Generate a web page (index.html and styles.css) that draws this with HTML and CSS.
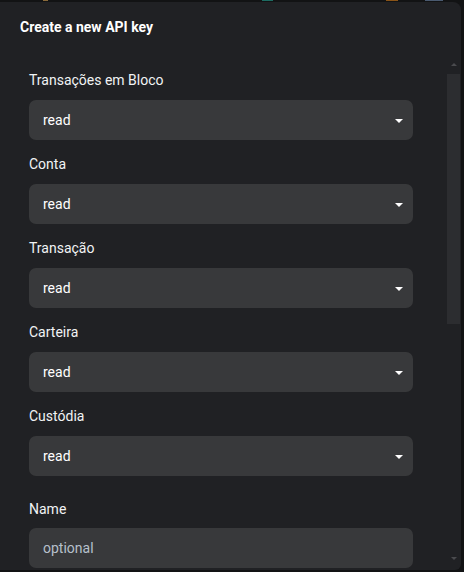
FILE: index.html
```html
<!DOCTYPE html>
<html lang="pt">
<head>
<meta charset="utf-8">
<link rel="stylesheet" href="styles.css">
</head>
<body>
<div class="backdrop-strip">
  <span class="bit bit-a"></span>
  <span class="bit bit-b"></span>
  <span class="bit bit-c"></span>
  <span class="bit bit-d"></span>
</div>
<div class="dialog">
  <div class="dialog-header">Create a new API key</div>
  <div class="dialog-body">
    <div class="content">
      <div class="field">
        <div class="label">Transações em Bloco</div>
        <div class="select"><span>read</span><span class="caret"></span></div>
      </div>
      <div class="field">
        <div class="label">Conta</div>
        <div class="select"><span>read</span><span class="caret"></span></div>
      </div>
      <div class="field">
        <div class="label">Transação</div>
        <div class="select"><span>read</span><span class="caret"></span></div>
      </div>
      <div class="field">
        <div class="label">Carteira</div>
        <div class="select"><span>read</span><span class="caret"></span></div>
      </div>
      <div class="field">
        <div class="label">Custódia</div>
        <div class="select"><span>read</span><span class="caret"></span></div>
      </div>
      <div class="field field-name">
        <div class="label">Name</div>
        <div class="input"><span class="placeholder">optional</span></div>
      </div>
    </div>
    <div class="scrollbar">
      <span class="sb-up"></span>
      <span class="sb-thumb"></span>
      <span class="sb-track"></span>
      <span class="sb-down"></span>
    </div>
  </div>
</div>
</body>
</html>
```
FILE: styles.css
```css
html, body {
  margin: 0;
  padding: 0;
}
body {
  width: 464px;
  height: 572px;
  overflow: hidden;
  background: #121314;
  font-family: Roboto, "Liberation Sans", Arial, sans-serif;
  color: #ffffff;
}
.backdrop-strip {
  height: 2px;
  display: flex;
}
.bit {
  height: 1px;
  display: block;
}
.bit-a { margin-left: 43px; width: 5px; background: #8a6a3a; }
.bit-b { margin-left: 214px; width: 11px; background: #1d6b62; }
.bit-c { margin-left: 113px; width: 12px; background: #8a5418; }
.bit-d { margin-left: 27px; width: 18px; background: #4a5a70; }

.dialog {
  width: 461px;
  height: 568px;
  background: #202124;
  border-radius: 0 8px 6px 0;
  display: flex;
  flex-direction: column;
  overflow: hidden;
}
.dialog-header {
  height: 56px;
  box-sizing: border-box;
  padding: 16px 0 0 20px;
  font-size: 14px;
  font-weight: 700;
  line-height: 18px;
  color: #ffffff;
  flex: none;
}
.dialog-body {
  flex: 1;
  display: flex;
  min-height: 0;
}
.content {
  width: 447px;
  box-sizing: border-box;
  padding: 12px 34px 0 29px;
  flex: none;
  display: flex;
  flex-direction: column;
  gap: 14px;
}
.field-name {
  margin-top: 9px;
}
.label {
  font-size: 14px;
  line-height: 20px;
  color: #f1f3f4;
  margin-bottom: 10px;
}
.field-name .label {
  margin-bottom: 9px;
}
.select, .input {
  height: 40px;
  box-sizing: border-box;
  background: #38393b;
  border-radius: 7px;
  display: flex;
  align-items: center;
  justify-content: space-between;
  padding: 0 10px 0 14px;
  font-size: 14px;
  color: #ffffff;
}
.caret {
  width: 0;
  height: 0;
  border-left: 4.5px solid transparent;
  border-right: 4.5px solid transparent;
  border-top: 4.5px solid #ffffff;
  margin-top: 1px;
}
.placeholder {
  color: #b6c0cb;
}
.scrollbar {
  width: 13px;
  display: flex;
  flex-direction: column;
  align-items: center;
  padding-bottom: 4px;
}
.sb-up, .sb-down {
  width: 0;
  height: 0;
  border-left: 3.5px solid transparent;
  border-right: 3.5px solid transparent;
  flex: none;
}
.sb-up {
  margin-top: 5px;
  margin-bottom: 8px;
  border-bottom: 3.5px solid #4a4b4e;
}
.sb-thumb {
  width: 13px;
  height: 250px;
  background: #2c2d30;
  flex: none;
}
.sb-track {
  flex: 1;
}
.sb-down {
  border-top: 3.5px solid #4a4b4e;
  margin-bottom: 6px;
}
```
